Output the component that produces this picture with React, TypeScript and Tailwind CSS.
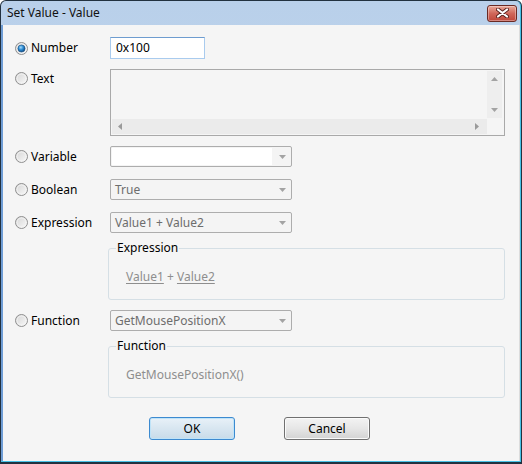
import React from "react";

function Radio({ checked }: { checked?: boolean }) {
  return (
    <svg width="13" height="13" viewBox="0 0 13 13" className="shrink-0">
      <defs>
        <linearGradient id="rbg" x1="0" y1="0" x2="1" y2="1">
          <stop offset="0" stopColor="#d4d4d4" />
          <stop offset="1" stopColor="#fafafa" />
        </linearGradient>
        <radialGradient id="rdot" cx="0.4" cy="0.35" r="0.75">
          <stop offset="0" stopColor="#a8dcfa" />
          <stop offset="0.45" stopColor="#2a8bd4" />
          <stop offset="1" stopColor="#0a3a6e" />
        </radialGradient>
      </defs>
      <circle cx="6.5" cy="6.5" r="6" fill="url(#rbg)" stroke="#8f8f8f" strokeWidth="1" />
      <circle cx="6.5" cy="6.5" r="4.5" fill="none" stroke="#f4f4f4" strokeWidth="0.8" />
      {checked && <circle cx="6.5" cy="6.5" r="3.6" fill="url(#rdot)" stroke="#1b4f80" strokeWidth="0.6" />}
    </svg>
  );
}

function DownArrow({ color = "#a3a3a3" }: { color?: string }) {
  return (
    <svg width="7" height="4" viewBox="0 0 7 4">
      <path d="M0 0h7L3.5 4z" fill={color} />
    </svg>
  );
}
function UpArrow() {
  return (
    <svg width="7" height="4" viewBox="0 0 7 4">
      <path d="M0 4h7L3.5 0z" fill="#a3a3a3" />
    </svg>
  );
}
function LeftArrow() {
  return (
    <svg width="4" height="7" viewBox="0 0 4 7">
      <path d="M4 0v7L0 3.5z" fill="#9a9a9a" />
    </svg>
  );
}
function RightArrow() {
  return (
    <svg width="4" height="7" viewBox="0 0 4 7">
      <path d="M0 0v7L4 3.5z" fill="#9a9a9a" />
    </svg>
  );
}

function Combo({ value, white }: { value?: string; white?: boolean }) {
  return (
    <div className="w-[182px] h-[21px] border border-[#adadad] rounded-[2px] bg-[#f4f4f4] flex items-stretch">
      {white ? (
        <div className="w-[160px] my-[1px] ml-[1px] bg-white" />
      ) : (
        <div className="flex-1 flex items-center pl-[4px] text-[#6d6d6d] text-[12px] leading-none">{value}</div>
      )}
      <div className="ml-auto w-[17px] flex items-center justify-center">
        <DownArrow />
      </div>
    </div>
  );
}

function Row({ label, checked, children }: { label: string; checked?: boolean; children: React.ReactNode }) {
  return (
    <div className="flex items-start">
      <div className="w-[107px] h-[21px] pl-[12px] flex items-center gap-[3px]">
        <Radio checked={checked} />
        <span className="text-[12px] leading-none text-black">{label}</span>
      </div>
      {children}
    </div>
  );
}

function Group({ title, children }: { title: string; children: React.ReactNode }) {
  return (
    <div className="relative ml-[105px] w-[397px] h-[52px] border border-[#d5dfe5] rounded-[3px] pl-[17px] pt-[19px]">
      <span className="absolute left-[7px] top-[-8px] px-[1px] bg-[#f5f5f5] text-[12px] leading-[14px] text-black">
        {title}
      </span>
      <div className="text-[12px] leading-[18px] text-[#8e8e8e]">{children}</div>
    </div>
  );
}

export default function App() {
  return (
    <div className="w-[522px] h-[464px] bg-[#22313f] rounded-t-[6px] pt-px px-px pb-[2px] flex font-['Noto_Sans',sans-serif]">
      <div className="flex-1 flex flex-col rounded-t-[5px] overflow-hidden bg-gradient-to-b from-[#b9d0ea] to-[#c9dbef] border-r border-b border-[#47c1e6]">
        <div className="h-[24px] shrink-0 flex items-center justify-between pl-[6px] pr-[3px]">
          <span className="text-[12px] leading-none text-[#111]">Set Value - Value</span>
          <div className="w-[30px] h-[17px] rounded-[3px] border border-[#6a2a24] bg-gradient-to-b from-[#e9a899] via-[#d0675a] to-[#c0463a] flex items-center justify-center shadow-[inset_0_0_0_1px_rgba(255,255,255,0.35)]">
            <svg width="13" height="10" viewBox="0 0 13 10">
              <path d="M2 1.5L11 8.5M11 1.5L2 8.5" stroke="#5a2420" strokeWidth="4" strokeLinecap="round" />
              <path d="M2 1.5L11 8.5M11 1.5L2 8.5" stroke="#ffffff" strokeWidth="2.2" strokeLinecap="round" />
            </svg>
          </div>
        </div>
        <div className="flex-1 bg-[#f5f5f5] border-l-2 border-l-[#6f9dd5] border-r border-r-[#dcdcdc] pt-[12px] flex flex-col">
          {/* Number */}
          <div className="flex items-start">
            <div className="w-[107px] h-[22px] pl-[12px] flex items-center gap-[3px]">
              <Radio checked />
              <span className="text-[12px] leading-none text-black">Number</span>
            </div>
            <div className="w-[95px] h-[22px] bg-white border border-[#a9cbee] border-t-[#6e9ccf] flex items-center pl-[5px] text-[12px] leading-none text-black">
              0x100
            </div>
          </div>

          {/* Text */}
          <div className="flex items-start mt-[10px]">
            <div className="w-[107px] h-[19px] pl-[12px] flex items-center gap-[3px]">
              <Radio />
              <span className="text-[12px] leading-none text-black">Text</span>
            </div>
            <div className="w-[395px] h-[67px] border border-[#a9a9a9] p-px flex flex-col">
              <div className="flex h-[47px]">
                <div className="flex-1" />
                <div className="w-[15px] mr-px bg-[#eeeeee] flex flex-col items-center justify-between py-[6px]">
                  <UpArrow />
                  <DownArrow />
                </div>
              </div>
              <div className="flex h-[15px] mt-px">
                <div className="w-[375px] bg-[#ebebeb] flex items-center justify-between pl-[6px] pr-[8px]">
                  <LeftArrow />
                  <RightArrow />
                </div>
              </div>
            </div>
          </div>

          <div className="mt-[10px] flex flex-col gap-[12px]">
            <Row label="Variable">
              <Combo white />
            </Row>
            <Row label="Boolean">
              <Combo value="True" />
            </Row>
            <Row label="Expression">
              <Combo value="Value1 + Value2" />
            </Row>
          </div>

          <div className="mt-[15px]">
            <Group title="Expression">
              <span className="underline underline-offset-2">Value1</span> + <span className="underline underline-offset-2">Value2</span>
            </Group>
          </div>

          <div className="mt-[10px]">
            <Row label="Function">
              <Combo value="GetMousePositionX" />
            </Row>
          </div>

          <div className="mt-[15px]">
            <Group title="Function">GetMousePositionX()</Group>
          </div>

          <div className="mt-[19px] ml-[146px] flex gap-[49px]">
            <div className="w-[86px] h-[23px] rounded-[3px] border border-[#3c8ad0] bg-gradient-to-b from-[#e8f1f8] to-[#c8dbe9] shadow-[inset_0_0_0_1px_#bfe3f8] flex items-center justify-center text-[12px] leading-none text-black">
              OK
            </div>
            <div className="w-[86px] h-[23px] rounded-[3px] border border-[#707070] bg-gradient-to-b from-[#f3f3f3] via-[#e6e6e6] to-[#d3d3d3] shadow-[inset_0_0_0_1px_#fafafa] flex items-center justify-center text-[12px] leading-none text-black">
              Cancel
            </div>
          </div>
        </div>
      </div>
    </div>
  );
}
